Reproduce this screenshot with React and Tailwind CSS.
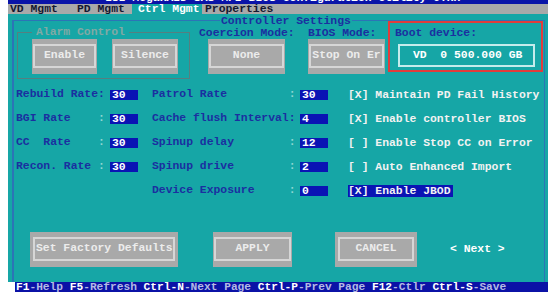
import React from 'react';

const mono = { fontFamily: '"Liberation Mono", "DejaVu Sans Mono", monospace' };

const GrayButton = ({ label, className = '', inner = '' }) => (
  <div className={`bg-[#a9a9a9] px-[1px] pt-[5px] pb-[6px] ${className}`}>
    <div className={`h-full border-2 border-[#d6d6d6] flex items-center text-[#ececec] ${inner}`}>
      {label}
    </div>
  </div>
);

const ValueBox = ({ value }) => (
  <div className="w-[28px] h-[10px] bg-[#0a14b4] text-white leading-[10px] pl-[2px]">{value}</div>
);

const rows = [
  { left: 'Rebuild Rate', pad: '', mid: 'Patrol Rate         ', midColon: false, lv: '30', mv: '30', check: '[X] Maintain PD Fail History' },
  { left: 'BGI Rate    ', pad: true, mid: 'Cache flush Interval', midColon: true, lv: '30', mv: '4', check: '[X] Enable controller BIOS' },
  { left: 'CC  Rate    ', pad: true, mid: 'Spinup delay        ', midColon: false, lv: '30', mv: '12', check: '[ ] Enable Stop CC on Error' },
  { left: 'Recon. Rate ', pad: true, mid: 'Spinup drive        ', midColon: false, lv: '30', mv: '2', check: '[ ] Auto Enhanced Import' },
  { left: null, mid: 'Device Exposure     ', midColon: false, mv: '0', check: '[X] Enable JBOD', hl: true },
];

const status = [
  ['F1', '-Help '],
  ['F5', '-Refresh '],
  ['Ctrl-N', '-Next Page '],
  ['Ctrl-P', '-Prev Page '],
  ['F12', '-Ctlr '],
  ['Ctrl-S', '-Save'],
];

export default function App() {
  return (
    <div className="w-[550px] h-[293px] bg-white overflow-hidden font-bold text-[11.4px]" style={mono}>
      <div className="ml-[8px] w-[540px]">
        {/* title bar, mostly scrolled out of view */}
        <div className="h-[4px] bg-[#0a14a8] overflow-hidden">
          <div className="-mt-[7px] ml-[97px] text-white leading-[11px] whitespace-pre">
            LSI MegaRAID SAS-MFI BIOS Configuration Utility 6.xx
          </div>
        </div>

        {/* tabs */}
        <div className="h-[10px] bg-[#a9a9a9] flex leading-[10px] text-[#141830] whitespace-pre">
          <span className="w-[69px] pl-[2px]">VD Mgmt</span>
          <span className="w-[55px]">PD Mgmt</span>
          <span className="w-[70px] pl-[6px] bg-[#16a6a6] text-white">Ctrl Mgmt</span>
          <span className="pl-[3px]">Properties</span>
        </div>

        {/* main panel */}
        <div className="h-[268px] bg-[#16a6a6] pt-[6px] pl-[4px] pr-[3px]">
          <div className="relative h-full border-l-2 border-t border-r border-[#2c74b6]">
            <div className="absolute -top-[5px] left-[206px] px-[1px] bg-[#16a6a6] text-[#1b2fa0] leading-[11px]">
              Controller Settings
            </div>

            {/* top section */}
            <div className="flex items-start">
              <div className="relative ml-[3px] mt-[11px] w-[173px] h-[47px] border border-[#567f80] flex items-start pl-[14px] pt-[6px]">
                <div className="absolute -top-[6px] left-[14px] px-[4px] bg-[#16a6a6] text-[#82a9a4] leading-[11px]">
                  Alarm Control
                </div>
                <GrayButton label="Enable" className="w-[65px] h-[35px]" inner="justify-center" />
                <GrayButton label="Silence" className="ml-[15px] w-[66px] h-[35px]" inner="justify-center" />
              </div>

              <div className="ml-[9px] mt-[7px] w-[109px]">
                <div className="h-[10px] leading-[10px] text-[#1b2fa0] whitespace-pre">Coercion Mode:</div>
                <GrayButton label="None" className="mt-[1px] ml-[9px] w-[77px] h-[35px]" inner="justify-center" />
              </div>

              <div className="mt-[7px] w-[80px]">
                <div className="h-[10px] leading-[10px] text-[#1b2fa0] whitespace-pre">BIOS Mode:</div>
                <GrayButton label="Stop On Er" className="mt-[1px] w-[77px] h-[35px]" inner="justify-center" />
              </div>

              <div className="w-[155px] h-[51px] border-2 border-[#e23c3c] pl-[5px] pt-[5px]">
                <div className="h-[10px] leading-[10px] text-[#1b2fa0] whitespace-pre">Boot device:</div>
                <div className="mt-[6px] ml-[3px] w-[137px] h-[23px] border-2 border-[#c4ecec] flex items-center pl-[13px] text-white whitespace-pre">
                  VD  0 500.000 GB
                </div>
              </div>
            </div>

            {/* setting rows */}
            <div className="mt-[4px]">
              {rows.map((r, i) => (
                <div key={i} className="h-[24px] flex items-center whitespace-pre">
                  {r.left !== null ? (
                    <>
                      <div className="ml-[2px] w-[94px] text-[#1b2fa0]">
                        {r.left}
                        <span className={r.pad ? 'text-[#8fd6d2]' : ''}>:</span>
                      </div>
                      <ValueBox value={r.lv} />
                    </>
                  ) : (
                    <div className="w-[124px]" />
                  )}
                  <div className="ml-[14px] w-[148px] text-[#1b2fa0]">
                    {r.mid}
                    <span className={r.midColon ? '' : 'text-[#8fd6d2]'}>:</span>
                  </div>
                  <ValueBox value={r.mv} />
                  <div className={`ml-[20px] leading-[12px] text-[#f2f2f2] ${r.hl ? 'bg-[#0a14b4] pr-[2px]' : ''}`}>
                    {r.check}
                  </div>
                </div>
              ))}
            </div>

            {/* bottom buttons */}
            <div className="mt-[29px] flex items-center">
              <GrayButton label="Set Factory Defaults" className="ml-[16px] w-[148px] h-[35px] px-[3px] pt-[4px] pb-[6px]" inner="pl-[1px]" />
              <GrayButton label="APPLY" className="ml-[35px] w-[79px] h-[35px]" inner="justify-center" />
              <GrayButton label="CANCEL" className="ml-[43px] w-[82px] h-[35px] px-[3px]" inner="justify-center" />
              <div className="ml-[33px] text-white whitespace-pre">{'< Next >'}</div>
            </div>
          </div>
        </div>
      </div>

      {/* status bar */}
      <div className="ml-[15px] w-[533px] h-[10px] bg-[#0b12a6] leading-[10px] whitespace-pre pl-[1px] text-[11.2px]">
        {status.map(([k, d]) => (
          <span key={k}>
            <span className="text-white">{k}</span>
            <span className="text-[#b4b9e4]">{d}</span>
          </span>
        ))}
      </div>
    </div>
  );
}
